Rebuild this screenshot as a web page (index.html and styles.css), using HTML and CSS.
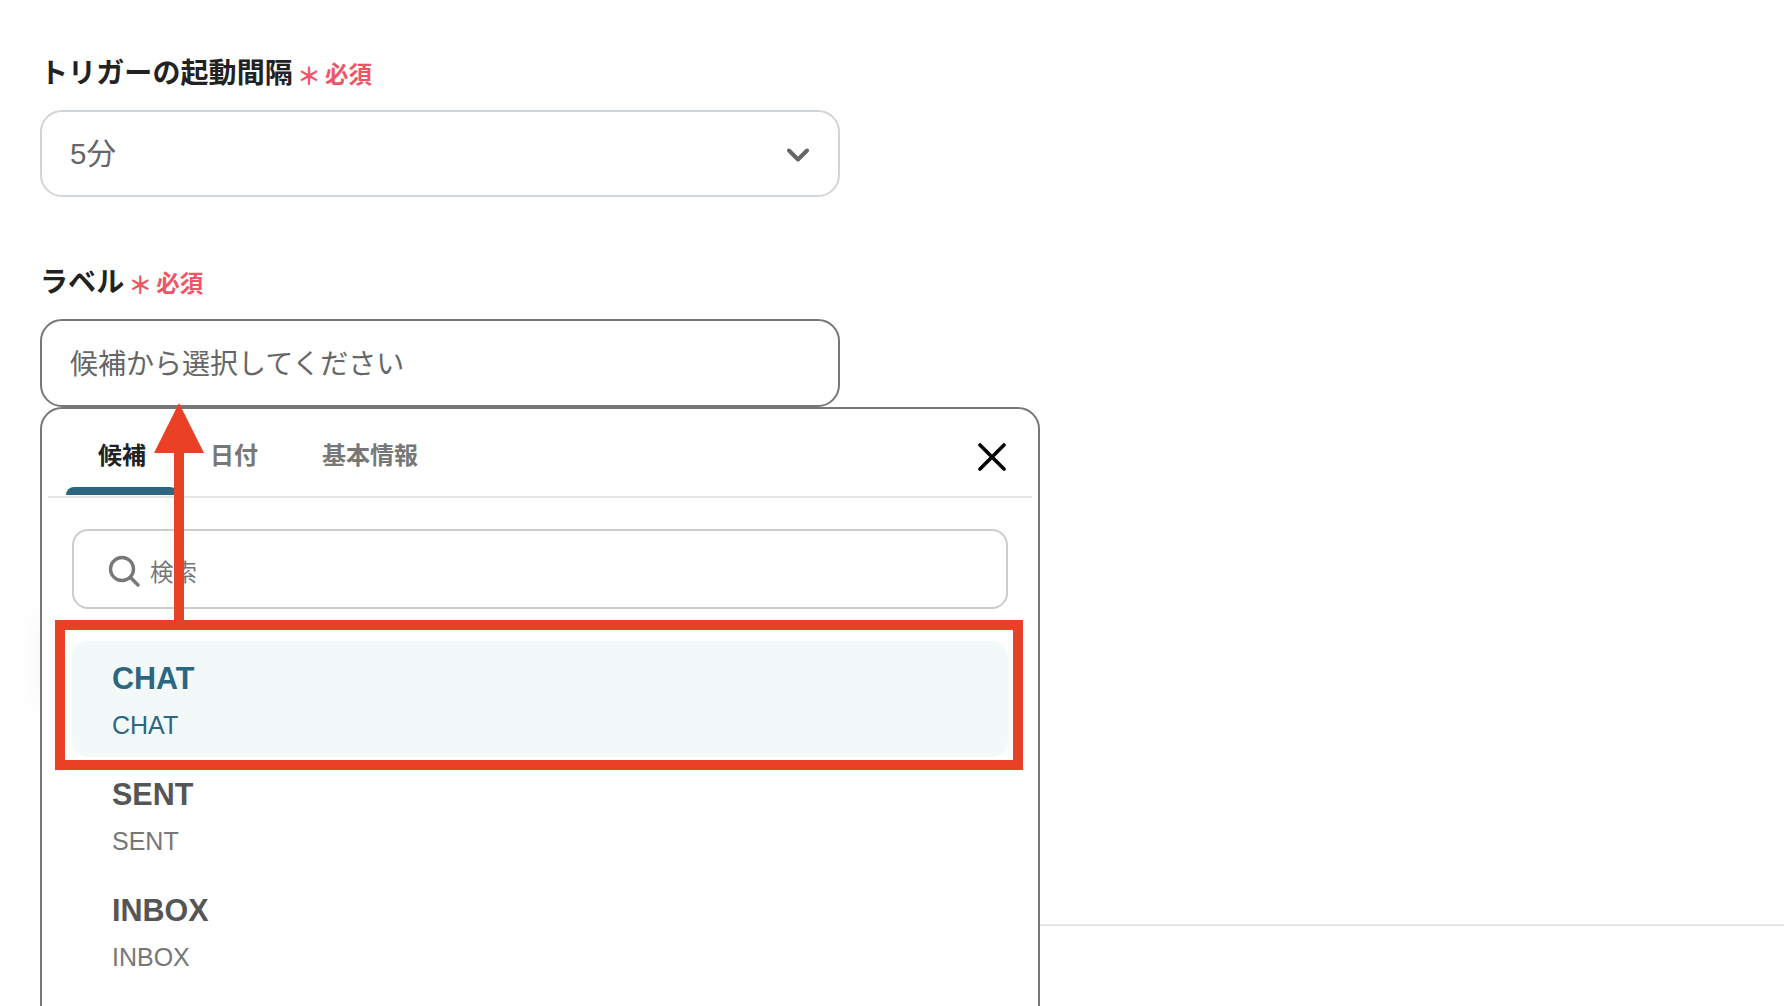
FILE: index.html
```html
<!DOCTYPE html>
<html lang="ja">
<head>
<meta charset="utf-8">
<title>トリガー設定</title>
<link rel="stylesheet" href="styles.css">
</head>
<body>
<main class="page">
  <div class="ghost-shadow"></div>
  <form class="form">
    <section class="field field-interval">
      <div class="label"><span class="label-text">トリガーの起動間隔</span><span class="req"><span class="req-mark">＊</span>必須</span></div>
      <div class="control control-select">
        <span class="value value-large">5分</span>
        <svg class="chevron" viewBox="0 0 22 14" width="22" height="14"><path d="M2 2.5 L11 11.5 L20 2.5" fill="none" stroke="#666" stroke-width="4" stroke-linecap="round" stroke-linejoin="round"/></svg>
      </div>
    </section>
    <section class="field field-label">
      <div class="label"><span class="label-text">ラベル</span><span class="req"><span class="req-mark">＊</span>必須</span></div>
      <div class="control control-input">
        <span class="value">候補から選択してください</span>
      </div>
      <div class="popup">
        <div class="tabs">
          <span class="tab tab-active">候補</span>
          <span class="tab">日付</span>
          <span class="tab">基本情報</span>
          <svg class="close" viewBox="0 0 28 28" width="28" height="28"><path d="M2 2 L26 26 M26 2 L2 26" fill="none" stroke="#000" stroke-width="3.6" stroke-linecap="round"/></svg>
        </div>
        <div class="search">
          <svg class="search-icon" viewBox="0 0 32 32" width="32" height="32"><circle cx="14" cy="14" r="11.5" fill="none" stroke="#777" stroke-width="3.4"/><path d="M22.5 22.5 L30 30" fill="none" stroke="#777" stroke-width="3.4" stroke-linecap="round"/></svg>
          <span class="search-text">検索</span>
        </div>
        <ul class="list">
          <li class="item item-active"><span class="item-title">CHAT</span><span class="item-sub">CHAT</span></li>
          <li class="item"><span class="item-title">SENT</span><span class="item-sub">SENT</span></li>
          <li class="item"><span class="item-title">INBOX</span><span class="item-sub">INBOX</span></li>
        </ul>
      </div>
    </section>
  </form>
  <hr class="divider">
  <div class="mark-box"></div>
  <svg class="mark-arrow" viewBox="0 0 50 218" width="50" height="218"><path d="M25 0 L50 50 L30 50 L30 218 L20 218 L20 50 L0 50 Z" fill="#ea4025"/></svg>
</main>
</body>
</html>
```

FILE: styles.css
```css
* { box-sizing: border-box; }
html, body { margin: 0; padding: 0; background: #fff; }
body { font-family: "Liberation Sans", "Noto Sans CJK JP", sans-serif; }
.page { position: relative; width: 1784px; height: 1006px; overflow: hidden; padding-top: 51px; }
.ghost-shadow { position: absolute; left: 44px; top: 625px; width: 20px; height: 70px; box-shadow: 0 0 30px 6px rgba(0,0,0,0.05); }
.form { position: relative; width: 800px; margin-left: 40px; display: flex; flex-direction: column; gap: 63px; }
.field { position: relative; }
.label { height: 42px; display: flex; align-items: center; margin-bottom: 17px; padding-bottom: 2px; }
.label-text { font-size: 28px; font-weight: 700; color: #222; white-space: nowrap; letter-spacing: 0.1px; }
.req { display: flex; align-items: center; margin-left: 6px; font-size: 23.5px; font-weight: 700; color: #ee5666; margin-top: 4px; }
.req-mark { font-size: 24px; width: 28px; margin-left: -2px; margin-top: 3px; }
.control { height: 87px; border-radius: 22px; background: #fff; display: flex; align-items: center; justify-content: space-between; padding: 0 29px 3px 28px; font-size: 28px; color: #666; }
.control-select { border: 2px solid #d0d5da; }
.control-input { border: 2px solid #777; height: 88px; padding-bottom: 2px; }
.value { white-space: nowrap; }
.value-large { font-size: 29.5px; margin-bottom: 2px; }
.chevron { margin-top: 6px; }
.popup { position: absolute; top: 100%; left: 0; width: 1000px; height: 640px; background: #fff; border: 2px solid #777; border-radius: 22px; padding: 0 5px; z-index: 2; }
.tabs { position: relative; display: flex; align-items: center; height: 89px; border-bottom: 2px solid #e5e5e5; padding-left: 18px; margin: 0 1px; }
.tab { font-size: 24px; font-weight: 700; color: #777; padding: 0 32px; height: 87px; line-height: 94px; white-space: nowrap; position: relative; }
.tab-active { color: #222; }
.tab-active::after { content: ""; position: absolute; left: 0; right: 0; bottom: 1px; height: 8px; background: #2d667f; border-radius: 8px 8px 0 0; }
.close { position: absolute; right: 26px; top: 34px; }
.search { margin: 31px 25px 0 25px; height: 80px; border: 2px solid #ccc; border-radius: 16px; display: flex; align-items: center; padding-left: 34px; gap: 10px; }
.search-icon { flex: none; margin-top: 3px; }
.search-text { font-size: 23.5px; color: #777; margin-top: 3px; }
.list { list-style: none; margin: 32px 25px 0 25px; padding: 0; }
.item { height: 116px; border-radius: 16px; padding: 15px 0 0 40px; display: flex; flex-direction: column; color: #777; }
.item-title { font-size: 30.5px; font-weight: 700; line-height: 44px; color: #555; }
.item-sub { font-size: 25px; line-height: 50px; }
.item-active { background: #f3f9f9; color: #2d667f; }
.item-active .item-title { color: #2d667f; }
.divider { position: absolute; left: 1040px; right: 0; top: 924px; margin: 0; border: 0; height: 2px; background: #e5e5e5; }
.mark-box { position: absolute; left: 55px; top: 620px; width: 968px; height: 150px; border: 10px solid #ea4025; z-index: 3; }
.mark-arrow { position: absolute; left: 154px; top: 403px; z-index: 3; }
```
